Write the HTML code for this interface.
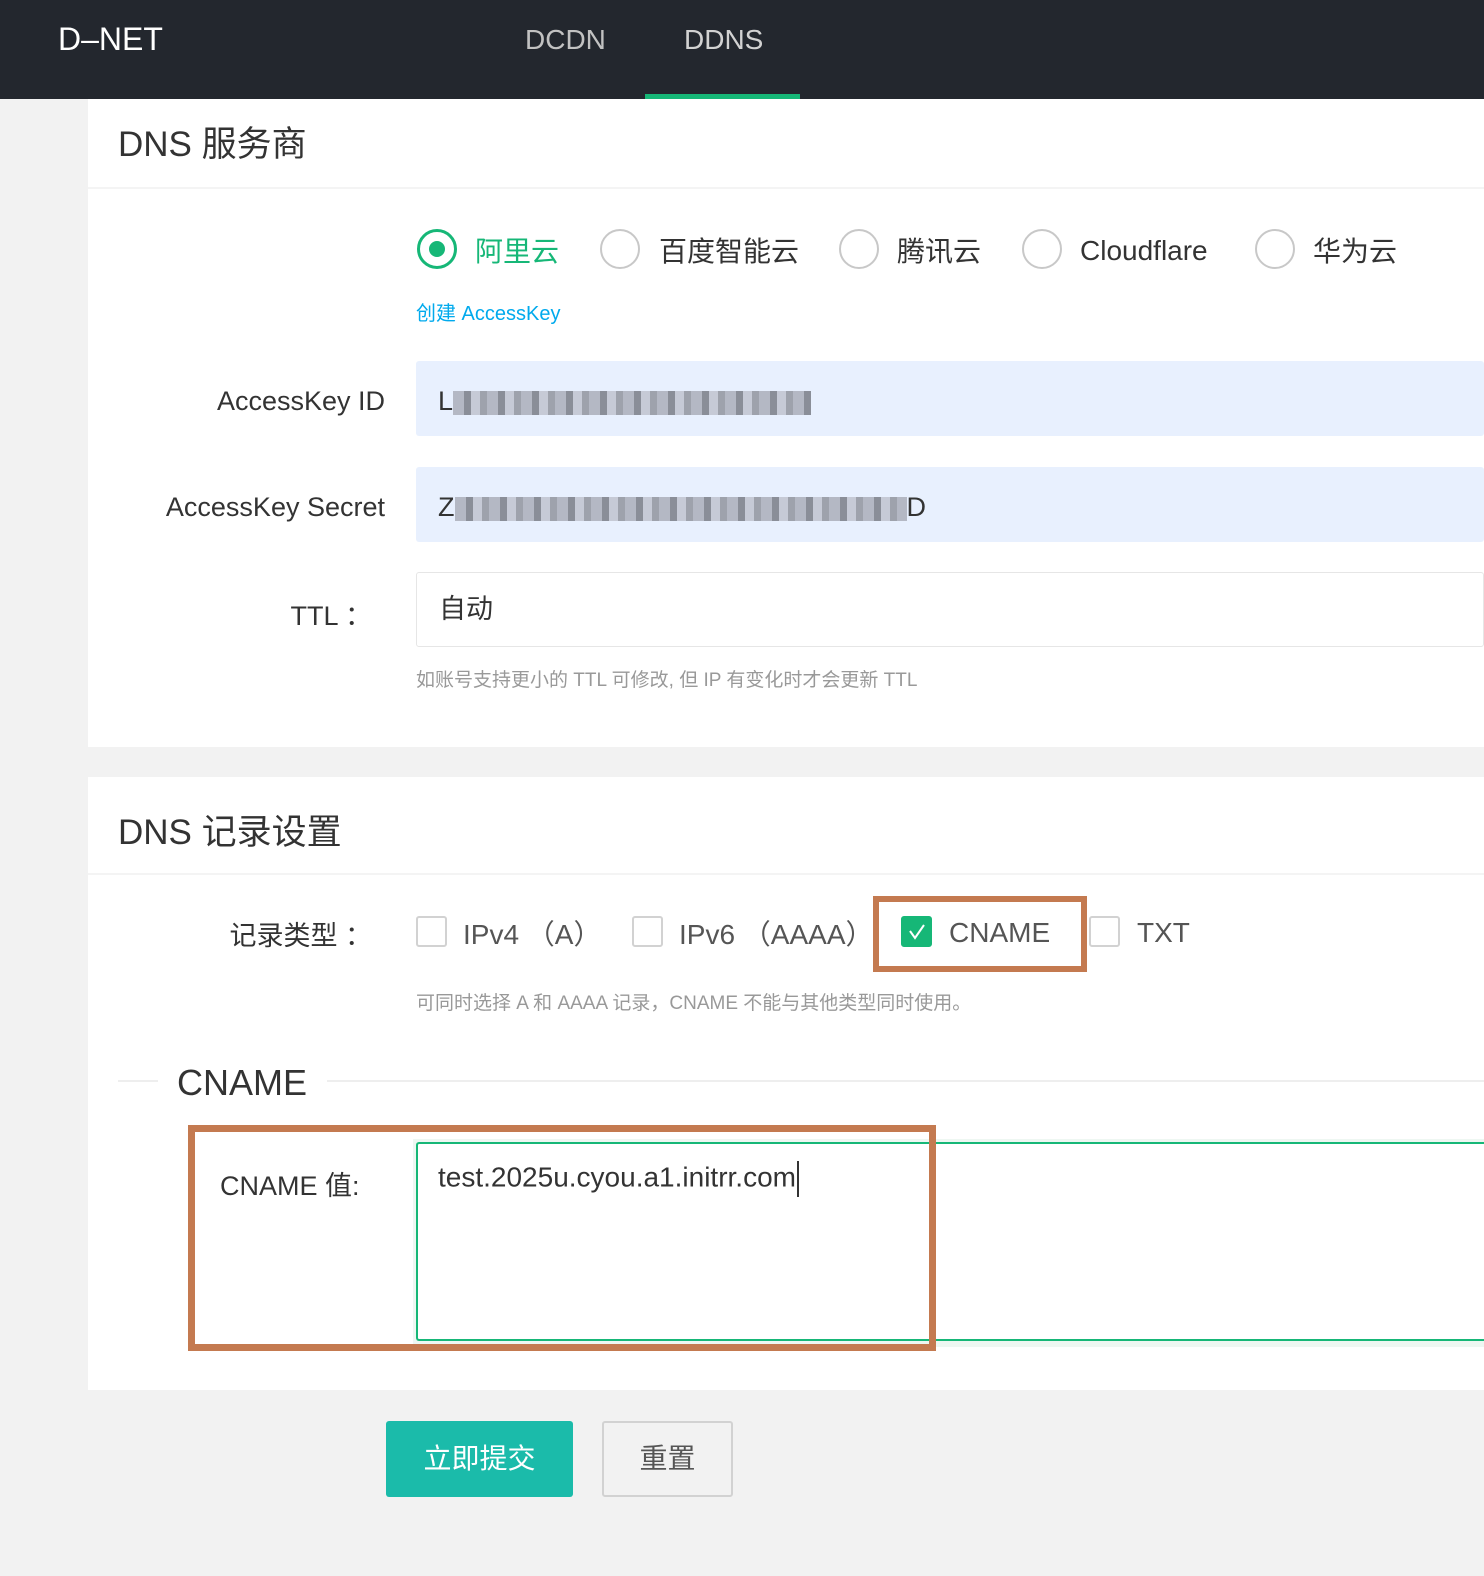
<!DOCTYPE html>
<html><head><meta charset="utf-8"><style>
*{margin:0;padding:0;box-sizing:border-box}
body{width:1484px;height:1576px;background:#f2f2f2;font-family:"Liberation Sans","Noto Sans CJK SC",sans-serif;position:relative;overflow:hidden;color:#333}
.a{position:absolute;white-space:nowrap}
.hdr{left:0;top:0;width:1484px;height:99px;background:#23272e}
.card{background:#fff;left:88px;width:1396px}
.lbl{font-size:27px;color:#333;text-align:right;width:300px}
.inp{left:416px;width:1068px;height:75px;border-radius:3px;font-size:27px;padding-left:22px;line-height:75px}
.rad{width:40px;height:40px;border-radius:50%;border:2px solid #c8c8c8;background:#fff}
.rt{font-size:28px;color:#333}
.cb{width:31px;height:31px;border:2px solid #d2d2d2;border-radius:3px;background:#fff}
.blur{display:inline-block;height:24px;vertical-align:middle;background:repeating-linear-gradient(90deg,#b4b8c4 0 11px,#8a8e98 11px 18px,#c6cad6 18px 27px,#9ea2ac 27px 34px)}
</style></head><body>
<div class="a hdr"></div>
<div class="a" style="left:58px;top:21px;font-size:32px;color:#fff">D–NET</div>
<div class="a" style="left:525px;top:24px;font-size:28px;color:#c2c2c2">DCDN</div>
<div class="a" style="left:684px;top:24px;font-size:28px;color:#d2d2d2">DDNS</div>
<div class="a" style="left:645px;top:94px;width:155px;height:5px;background:#16b777"></div>

<div class="a card" style="top:99px;height:648px"></div>
<div class="a" style="left:118px;top:116px;font-size:35px;color:#333">DNS 服务商</div>
<div class="a" style="left:88px;top:187px;width:1396px;height:2px;background:#f4f4f4"></div>

<div class="a rad" style="left:417px;top:229px;border:3px solid #16b777"></div>
<div class="a" style="left:429px;top:241px;width:16px;height:16px;border-radius:50%;background:#16b777"></div>
<div class="a rt" style="left:475px;top:230px;color:#16b777">阿里云</div>
<div class="a rad" style="left:600px;top:229px"></div>
<div class="a rt" style="left:659px;top:230px">百度智能云</div>
<div class="a rad" style="left:839px;top:229px"></div>
<div class="a rt" style="left:897px;top:230px">腾讯云</div>
<div class="a rad" style="left:1022px;top:229px"></div>
<div class="a rt" style="left:1080px;top:235px">Cloudflare</div>
<div class="a rad" style="left:1255px;top:229px"></div>
<div class="a rt" style="left:1313px;top:230px">华为云</div>
<div class="a" style="left:416px;top:297px;font-size:20px;color:#01aaed">创建 AccessKey</div>

<div class="a lbl" style="left:85px;top:386px">AccessKey ID</div>
<div class="a inp" style="top:361px;background:#e8f0fe;padding-top:3px">L<span class="blur" style="width:358px"></span></div>
<div class="a lbl" style="left:85px;top:492px">AccessKey Secret</div>
<div class="a inp" style="top:467px;background:#e8f0fe;padding-top:3px">Z<span class="blur" style="width:452px"></span>D</div>
<div class="a lbl" style="left:72px;top:594px">TTL ：</div>
<div class="a inp" style="top:572px;background:#fff;border:1px solid #e6e6e6;line-height:73px">自动</div>
<div class="a" style="left:416px;top:665px;font-size:19px;color:#999">如账号支持更小的 TTL 可修改, 但 IP 有变化时才会更新 TTL</div>

<div class="a card" style="top:777px;height:613px"></div>
<div class="a" style="left:118px;top:804px;font-size:35px;color:#333">DNS 记录设置</div>
<div class="a" style="left:88px;top:873px;width:1396px;height:2px;background:#f4f4f4"></div>

<div class="a lbl" style="left:72px;top:914px">记录类型 ：</div>
<div class="a cb" style="left:416px;top:916px"></div>
<div class="a rt" style="left:463px;top:913px;color:#555">IPv4 （A）</div>
<div class="a cb" style="left:632px;top:916px"></div>
<div class="a rt" style="left:679px;top:913px;color:#555">IPv6 （AAAA）</div>
<div class="a cb" style="left:901px;top:916px;background:#16b777;border-color:#16b777"></div>
<svg class="a" style="left:901px;top:916px" width="31" height="31"><path d="M9 15 L14 22 L23 9" stroke="#fff" stroke-width="2" fill="none"/></svg>
<div class="a rt" style="left:949px;top:917px;color:#555">CNAME</div>
<div class="a cb" style="left:1089px;top:916px"></div>
<div class="a rt" style="left:1137px;top:917px;color:#555">TXT</div>
<div class="a" style="left:873px;top:896px;width:214px;height:76px;border:6px solid #c47a50"></div>
<div class="a" style="left:416px;top:988px;font-size:19px;color:#999">可同时选择 A 和 AAAA 记录，CNAME 不能与其他类型同时使用。</div>

<div class="a" style="left:118px;top:1080px;width:40px;height:2px;background:#eee"></div>
<div class="a" style="left:327px;top:1080px;width:1157px;height:2px;background:#eee"></div>
<div class="a" style="left:177px;top:1062px;font-size:36px;color:#333">CNAME</div>

<div class="a" style="left:413px;top:1139px;width:1071px;height:208px;background:#eef7f2"></div>
<div class="a" style="left:416px;top:1142px;width:1068px;height:199px;border:2px solid #16b777;border-right:none;background:#fff;border-radius:3px 0 0 3px"></div>
<div class="a" style="left:438px;top:1161px;font-size:28px;color:#333">test.2025u.cyou.a1.initrr.com<span style="display:inline-block;width:2px;height:36px;background:#333;vertical-align:middle;margin-left:1px"></span></div>
<div class="a" style="left:220px;top:1164px;font-size:27px;color:#333">CNAME 值:</div>
<div class="a" style="left:188px;top:1125px;width:748px;height:226px;border:7px solid #c47a50"></div>

<div class="a" style="left:386px;top:1421px;width:187px;height:76px;background:#1bbbaa;border-radius:3px;color:#fff;font-size:28px;text-align:center;line-height:76px">立即提交</div>
<div class="a" style="left:602px;top:1421px;width:131px;height:76px;border:2px solid #d2d2d2;border-radius:3px;color:#555;font-size:28px;text-align:center;line-height:72px">重置</div>
</body></html>
